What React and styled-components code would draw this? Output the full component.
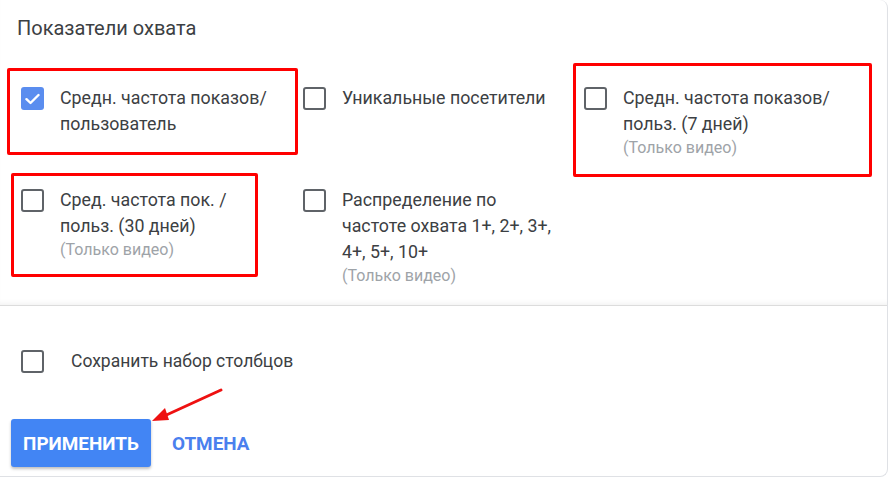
import React from "react";
import styled, { createGlobalStyle } from "styled-components";

const GlobalStyle = createGlobalStyle`
  body {
    margin: 0;
    background: #ffffff;
    font-family: Roboto, "Noto Sans", Arial, sans-serif;
  }
`;

const Card = styled.div`
  width: 887px;
  height: 476px;
  border-right: 1px solid #dfe1e5;
  border-bottom: 1px solid #dfe1e5;
  border-radius: 0 8px 8px 0;
  display: flex;
  flex-direction: column;
  overflow: hidden;
`;

const TopSection = styled.section`
  padding: 16px 0 18px 0;
  border-bottom: 1px solid #dcdcdc;
  box-shadow: inset 0 -5px 5px -3px rgba(0, 0, 0, 0.05);
`;

const Title = styled.h3`
  margin: 0 0 44px 17px;
  font-size: 20px;
  line-height: 25px;
  font-weight: 400;
  color: #3c4043;
`;

const Grid = styled.div`
  display: grid;
  grid-template-columns: 282px 281px 1fr;
  row-gap: 28px;
  padding-left: 21px;
`;

const Option = styled.label`
  position: relative;
  display: flex;
  align-items: flex-start;
  gap: 16px;
`;

const Box = styled.span`
  flex: none;
  box-sizing: border-box;
  width: 23px;
  height: 23px;
  margin-top: 2px;
  border-radius: 3px;
  border: ${(p) => (p.$checked ? "none" : "2px solid #5f6368")};
  background: ${(p) => (p.$checked ? "#5a8def" : "transparent")};
  display: flex;
  align-items: center;
  justify-content: center;
`;

const Text = styled.div`
  white-space: nowrap;
  font-size: 17.8px;
  line-height: 26px;
  color: #3c4043;
`;

const Note = styled.div`
  font-size: 16px;
  line-height: 22px;
  color: #9ea3a8;
`;

const Highlight = styled.span`
  position: absolute;
  box-sizing: border-box;
  border: 3px solid #ff0000;
  border-radius: 2px;
  pointer-events: none;
`;

const BottomSection = styled.section`
  position: relative;
  flex: 1;
  display: flex;
  flex-direction: column;
  align-items: flex-start;
  padding: 42px 0 0 11px;
`;

const SaveRow = styled.label`
  display: flex;
  align-items: center;
  gap: 27px;
  margin-left: 10px;
  font-size: 17.5px;
  color: #3c4043;
`;

const Actions = styled.div`
  display: flex;
  align-items: center;
  gap: 21px;
  margin-top: 46px;
`;

const Button = styled.button`
  font-family: Roboto, "Noto Sans", Arial, sans-serif;
  font-size: 18.9px;
  font-weight: 700;
  text-transform: uppercase;
  border: none;
  border-radius: 3px;
  height: 48px;
  cursor: pointer;
  padding: 0;
  width: ${(p) => (p.$primary ? "140px" : "auto")};
  background: ${(p) => (p.$primary ? "#4285f4" : "transparent")};
  color: ${(p) => (p.$primary ? "#ffffff" : "#4a80ee")};
  box-shadow: ${(p) =>
    p.$primary ? "0 2px 3px rgba(0, 0, 0, 0.25)" : "none"};
`;

const Arrow = styled.svg`
  position: absolute;
  left: 148px;
  top: 80px;
  pointer-events: none;
`;

function Check() {
  return (
    <svg width="15" height="12" viewBox="0 0 15 12">
      <path
        d="M1.5 6.2 L5.5 10 L13.5 2"
        fill="none"
        stroke="#fff"
        strokeWidth="2.4"
        strokeLinecap="round"
        strokeLinejoin="round"
      />
    </svg>
  );
}

function CheckOption({ checked, lines, note, mark }) {
  return (
    <Option>
      <Box $checked={checked}>{checked && <Check />}</Box>
      <Text>
        {lines.map((line) => (
          <div key={line}>{line}</div>
        ))}
        {note && <Note>{note}</Note>}
      </Text>
      {mark && (
        <Highlight
          style={{
            left: mark.l,
            top: mark.t,
            width: mark.w,
            height: mark.h,
          }}
        />
      )}
    </Option>
  );
}

export default function App() {
  return (
    <>
      <GlobalStyle />
      <Card>
        <TopSection>
          <Title>Показатели охвата</Title>
          <Grid>
            <CheckOption
              checked
              lines={["Средн. частота показов/", "пользователь"]}
              mark={{ l: -14, t: -17, w: 291, h: 87 }}
            />
            <CheckOption lines={["Уникальные посетители"]} />
            <CheckOption
              lines={["Средн. частота показов/", "польз. (7 дней)"]}
              note="(Только видео)"
              mark={{ l: -11, t: -22, w: 299, h: 114 }}
            />
            <CheckOption
              lines={["Сред. частота пок. /", "польз. (30 дней)"]}
              note="(Только видео)"
              mark={{ l: -10, t: -14, w: 247, h: 104 }}
            />
            <CheckOption
              lines={[
                "Распределение по",
                "частоте охвата 1+, 2+, 3+,",
                "4+, 5+, 10+",
              ]}
              note="(Только видео)"
            />
          </Grid>
        </TopSection>
        <BottomSection>
          <SaveRow>
            <Box />
            Сохранить набор столбцов
          </SaveRow>
          <Actions>
            <Button $primary>Применить</Button>
            <Button>Отмена</Button>
          </Actions>
          <Arrow width="80" height="40" viewBox="0 0 80 40">
            <path d="M73 4 L14 31" stroke="#ee1111" strokeWidth="3" strokeLinecap="round" />
            <path d="M4 35 L17 22 L21 34 Z" fill="#ee1111" />
          </Arrow>
        </BottomSection>
      </Card>
    </>
  );
}
